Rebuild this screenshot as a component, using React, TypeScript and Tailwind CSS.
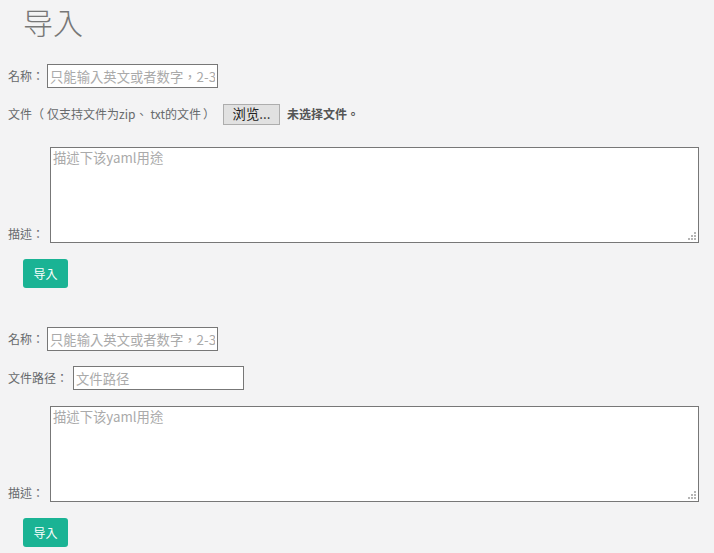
const font = { fontFamily: '"Noto Sans CJK TC", "Open Sans", sans-serif' }

function NameRow({ className = '' }: { className?: string }) {
  return (
    <div className={`flex items-center ${className}`}>
      <span className="w-[39px] shrink-0">名称：</span>
      <input
        placeholder="只能输入英文或者数字，2-32"
        className="h-[24px] w-[171px] border border-[#777] bg-white px-[2px] text-[13.33px] outline-none placeholder:text-[#aaa]"
      />
    </div>
  )
}

// 点状拖拽角
function Grip() {
  return (
    <svg width="8" height="8" viewBox="0 0 8 8" className="pointer-events-none absolute bottom-[3px] right-[3px]">
      <g fill="#b5b5b5">
        <rect x="6" y="0" width="2" height="2" />
        <rect x="3" y="3" width="2" height="2" />
        <rect x="6" y="3" width="2" height="2" />
        <rect x="0" y="6" width="2" height="2" />
        <rect x="3" y="6" width="2" height="2" />
        <rect x="6" y="6" width="2" height="2" />
      </g>
    </svg>
  )
}

function DescRow({ className = '' }: { className?: string }) {
  return (
    <div className={`flex items-end ${className}`}>
      <span className="w-[42px] shrink-0 leading-[18px]">描述：</span>
      <div className="relative">
        <textarea
          placeholder="描述下该yaml用途"
          className="block h-[96px] w-[649px] resize-none border border-[#777] bg-white px-[2px] py-[1px] text-[13.33px] leading-[18px] outline-none placeholder:text-[#aaa]"
        />
        <Grip />
      </div>
    </div>
  )
}

function SubmitButton({ className = '' }: { className?: string }) {
  return (
    <button className={`ml-[15px] h-[29px] w-[45px] rounded-[3px] bg-[#1ab394] text-[12px] text-white ${className}`}>
      导入
    </button>
  )
}

export default function App() {
  return (
    <div className="h-[553px] w-[714px] overflow-hidden bg-[#f3f3f4] pl-[8px] text-[12px] text-[#676a6c]" style={font}>
      <h2 className="ml-[15px] h-[44px] pt-[1px] text-[30px] font-light leading-[40px] text-[#777]">导入</h2>

      {/* 上传文件导入 */}
      <form onSubmit={e => e.preventDefault()}>
        <NameRow className="mt-[20px]" />
        <div className="mt-[14px] flex h-[24px] items-center">
          <span>
            文件<span className="mr-[3px]">（</span>仅支持文件为zip<span className="mr-[3px]">、</span>txt的文件
            <span className="ml-[2px] mr-[4px]">）</span>
          </span>
          <span className="ml-[4px] flex h-[21px] w-[57px] items-center justify-center border border-[#adadad] bg-[#e1e1e1] text-[13.33px] text-[#222]">
            浏览...
          </span>
          <span className="ml-[7px] font-bold text-[#555]">未选择文件。</span>
        </div>
        <DescRow className="mt-[21px]" />
        <SubmitButton className="mt-[16px]" />
      </form>

      {/* 按路径导入 */}
      <form onSubmit={e => e.preventDefault()} className="mt-[39px]">
        <NameRow />
        <div className="mt-[15px] flex items-center">
          <span className="w-[65px] shrink-0">文件路径：</span>
          <input
            placeholder="文件路径"
            className="h-[24px] w-[171px] border border-[#777] bg-white px-[2px] text-[13.33px] outline-none placeholder:text-[#aaa]"
          />
        </div>
        <DescRow className="mt-[16px]" />
        <SubmitButton className="mt-[16px]" />
      </form>
    </div>
  )
}
